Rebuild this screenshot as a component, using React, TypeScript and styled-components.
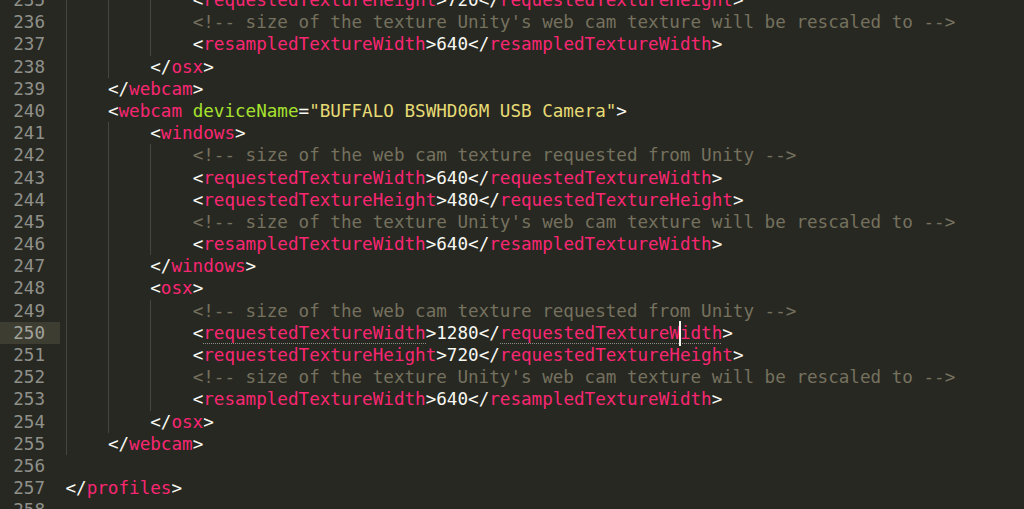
import React from 'react';
import styled, { createGlobalStyle } from 'styled-components';

const Global = createGlobalStyle`
  html, body { margin: 0; padding: 0; background: #272822; overflow: hidden; }
  body { width: 1024px; height: 509px; }
`;

const Editor = styled.div`
  height: 509px;
  overflow: hidden;
  background: #272822;
  font-family: "DejaVu Sans Mono", "Liberation Mono", monospace;
  font-size: 17.6px;
  line-height: 22.2px;
`;

const Scroller = styled.div`
  display: flex;
  margin-top: -11px;
`;

const Gutter = styled.div`
  flex: none;
  width: 60px;
  display: flex;
  flex-direction: column;
`;

const LineNo = styled.div<{ $active?: boolean }>`
  height: 22.2px;
  box-sizing: border-box;
  padding-right: 15px;
  text-align: right;
  color: ${(p) => (p.$active ? '#a2a39c' : '#8f908a')};
  background: ${(p) => (p.$active ? '#3e3d32' : 'transparent')};
`;

const Code = styled.div`
  flex: 1;
  padding-left: 5.5px;
  display: flex;
  flex-direction: column;
  white-space: pre;
  color: #f8f8f2;
`;

const Line = styled.div`
  height: 22.2px;
`;

const Indent = styled.span<{ $guide: boolean }>`
  display: inline-block;
  height: 22.2px;
  vertical-align: top;
  background: ${(p) =>
    p.$guide ? 'linear-gradient(#45463e, #45463e) no-repeat 0 0 / 1px 100%' : 'none'};
`;

const Punct = styled.span`
  color: #f8f8f2;
`;
const Tag = styled.span`
  color: #f92672;
`;
const Attr = styled.span`
  color: #a6e22e;
`;
const Str = styled.span`
  color: #e6db74;
`;
const Txt = styled.span`
  color: #f8f8f2;
`;
const Comment = styled.span`
  color: #75715e;
`;

const Matched = styled.span`
  display: inline-block;
  height: 22.2px;
  vertical-align: top;
  background-image: linear-gradient(to right, #8d8d87 50%, transparent 50%);
  background-size: 2px 1px;
  background-repeat: repeat-x;
  background-position: 0 21px;
`;

const Caret = styled.span`
  display: inline-block;
  position: relative;
  width: 0;
  height: 22.2px;
  vertical-align: top;
  &::after {
    content: '';
    position: absolute;
    left: -1px;
    top: -1px;
    width: 2px;
    height: 25px;
    background: #f8f8f0;
  }
`;

type Tok = React.ReactNode;

const open = (n: string): Tok[] => [<Punct>{'<'}</Punct>, <Tag>{n}</Tag>, <Punct>{'>'}</Punct>];
const close = (n: string): Tok[] => [<Punct>{'</'}</Punct>, <Tag>{n}</Tag>, <Punct>{'>'}</Punct>];
const elem = (n: string, v: string): Tok[] => [...open(n), <Txt>{v}</Txt>, ...close(n)];
const cmt = (s: string): Tok[] => [<Comment>{`<!-- ${s} -->`}</Comment>];

const REQ = 'size of the web cam texture requested from Unity';
const RES = "size of the texture Unity's web cam texture will be rescaled to";

type Row = { n: number; indent: number; guides: number; toks: Tok[]; active?: boolean };

const rows: Row[] = [
  { n: 235, indent: 3, guides: 3, toks: elem('requestedTextureHeight', '720') },
  { n: 236, indent: 3, guides: 3, toks: cmt(RES) },
  { n: 237, indent: 3, guides: 3, toks: elem('resampledTextureWidth', '640') },
  { n: 238, indent: 2, guides: 2, toks: close('osx') },
  { n: 239, indent: 1, guides: 1, toks: close('webcam') },
  {
    n: 240,
    indent: 1,
    guides: 1,
    toks: [
      <Punct>{'<'}</Punct>,
      <Tag>webcam</Tag>,
      <Punct> </Punct>,
      <Attr>deviceName</Attr>,
      <Punct>=</Punct>,
      <Str>"BUFFALO BSWHD06M USB Camera"</Str>,
      <Punct>{'>'}</Punct>,
    ],
  },
  { n: 241, indent: 2, guides: 2, toks: open('windows') },
  { n: 242, indent: 3, guides: 3, toks: cmt(REQ) },
  { n: 243, indent: 3, guides: 3, toks: elem('requestedTextureWidth', '640') },
  { n: 244, indent: 3, guides: 3, toks: elem('requestedTextureHeight', '480') },
  { n: 245, indent: 3, guides: 3, toks: cmt(RES) },
  { n: 246, indent: 3, guides: 3, toks: elem('resampledTextureWidth', '640') },
  { n: 247, indent: 2, guides: 2, toks: close('windows') },
  { n: 248, indent: 2, guides: 2, toks: open('osx') },
  { n: 249, indent: 3, guides: 3, toks: cmt(REQ) },
  {
    n: 250,
    indent: 3,
    guides: 3,
    active: true,
    toks: [
      <Punct>{'<'}</Punct>,
      <Matched>
        <Tag>requestedTextureWidth</Tag>
      </Matched>,
      <Punct>{'>'}</Punct>,
      <Txt>1280</Txt>,
      <Punct>{'</'}</Punct>,
      <Matched>
        <Tag>requestedTextureW</Tag>
        <Caret />
        <Tag>idth</Tag>
      </Matched>,
      <Punct>{'>'}</Punct>,
    ],
  },
  { n: 251, indent: 3, guides: 3, toks: elem('requestedTextureHeight', '720') },
  { n: 252, indent: 3, guides: 3, toks: cmt(RES) },
  { n: 253, indent: 3, guides: 3, toks: elem('resampledTextureWidth', '640') },
  { n: 254, indent: 2, guides: 2, toks: close('osx') },
  { n: 255, indent: 1, guides: 1, toks: close('webcam') },
  { n: 256, indent: 0, guides: 0, toks: [] },
  { n: 257, indent: 0, guides: 0, toks: close('profiles') },
  { n: 258, indent: 0, guides: 0, toks: [] },
];

export default function App() {
  return (
    <>
      <Global />
      <Editor>
        <Scroller>
          <Gutter>
            {rows.map((r) => (
              <LineNo key={r.n} $active={r.active}>
                {r.n}
              </LineNo>
            ))}
          </Gutter>
          <Code>
            {rows.map((r) => (
              <Line key={r.n}>
                {Array.from({ length: r.indent }).map((_, i) => (
                  <Indent key={i} $guide={i < r.guides}>
                    {'    '}
                  </Indent>
                ))}
                {r.toks.map((t, i) => (
                  <React.Fragment key={i}>{t}</React.Fragment>
                ))}
              </Line>
            ))}
          </Code>
        </Scroller>
      </Editor>
    </>
  );
}
